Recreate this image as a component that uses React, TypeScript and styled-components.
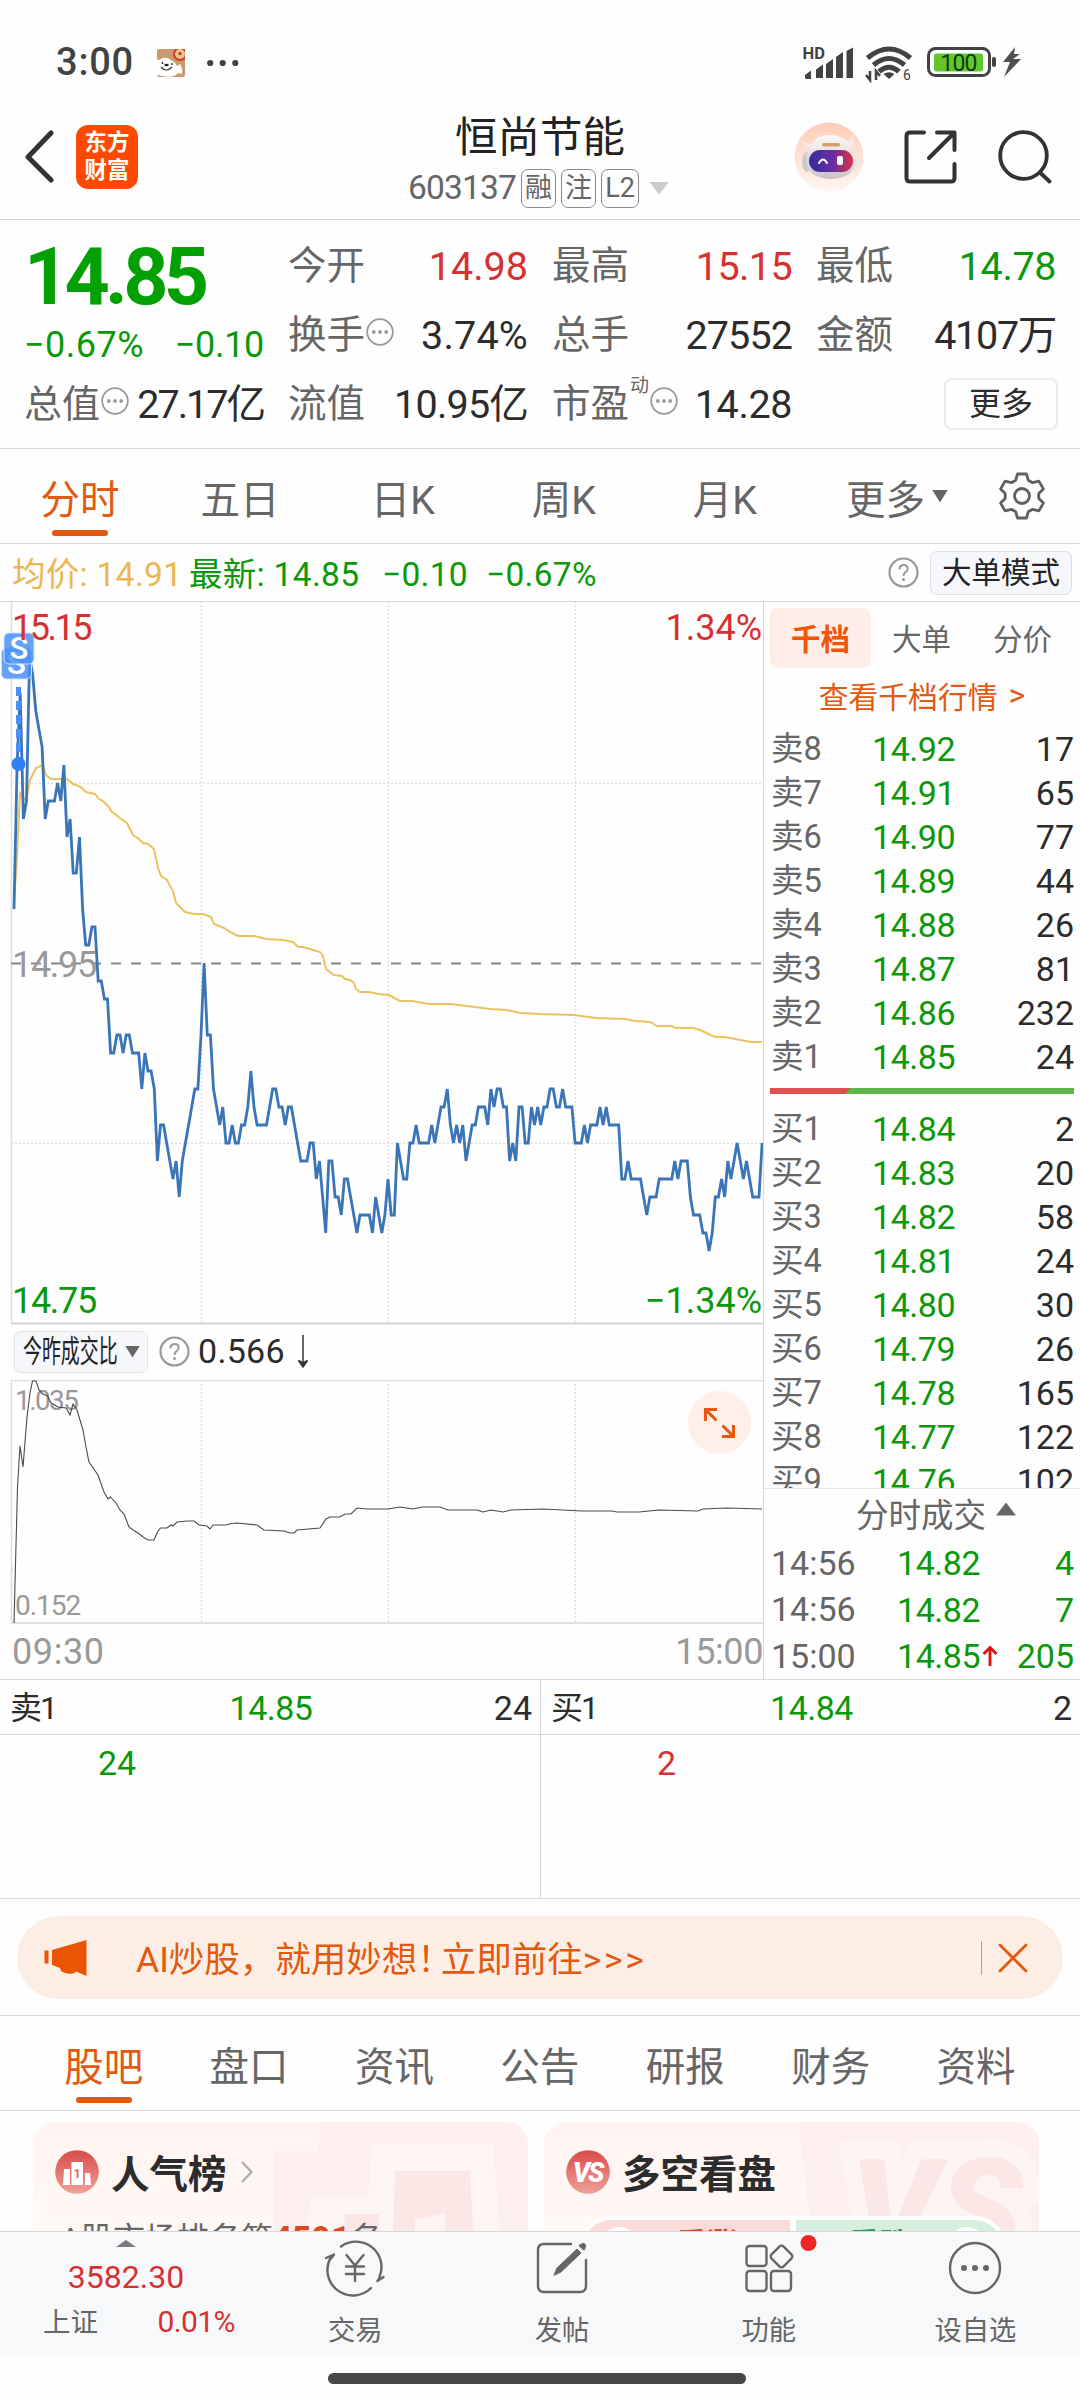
import React from "react";
import styled, { createGlobalStyle } from "styled-components";

const GREEN = "#0b980b";
const RED = "#d63031";
const ORANGE = "#e2590f";
const GRAY = "#666";
const DARK = "#2c2c2c";
const LINE = "#d9d9d9";
const FONT = `Roboto, "Noto Sans CJK SC", sans-serif`;

const GlobalStyle = createGlobalStyle`
  * { box-sizing: border-box; }
  body { margin: 0; background: #fefefe; font-family: ${FONT}; color: ${DARK}; }
  svg { display: block; flex: none; }
`;

const Screen = styled.div`
  width: 1080px;
  height: 2400px;
  overflow: hidden;
  display: flex;
  flex-direction: column;
  background: #fefefe;
  white-space: nowrap;
`;

const Text = styled.span<{ size: number; color?: string; weight?: number; ls?: number }>`
  font-size: ${(p) => p.size}px;
  line-height: 1.2;
  color: ${(p) => p.color ?? DARK};
  font-weight: ${(p) => p.weight ?? 400};
  letter-spacing: ${(p) => p.ls ?? 0}px;
`;

const Push = styled.div`
  flex: 1;
`;

/* ---------- status bar ---------- */

const StatusBar = styled.div`
  height: 96px;
  padding: 30px 59px 0 56px;
  display: flex;
  align-items: center;
  flex: none;
`;
const StatusApp = styled.div`
  margin: 0 22px 0 23px;
`;

function MascotIcon() {
  return (
    <svg width="28" height="28" viewBox="0 0 28 28">
      <rect width="28" height="28" rx="2" fill="#c99a6e" />
      <circle cx="23" cy="5" r="6" fill="#f0c48c" stroke="#c9402c" strokeWidth="2" />
      <circle cx="23" cy="4.500" r="1.600" fill="#b5342a" />
      <path d="M0 10q2 2 4 0q5-3 10 1q4 2 6 6l3-2q3 4 2 10l-4-1q-3 4-10 4L0 26z" fill="#fff" />
      <path d="M4 18q5 6 11 0" stroke="#333" strokeWidth="1.200" fill="none" />
      <ellipse cx="9.500" cy="16" rx="2.200" ry="1.300" fill="#222" />
      <path d="M5 13l1 2M15 14l0 2" stroke="#222" strokeWidth="1.300" />
    </svg>
  );
}

function StatusRight() {
  return (
    <svg width="220" height="40" viewBox="801 44 220 40" fill="#424242">
      <text x="802.500" y="60" fontSize="16.500" fontWeight="700" fontFamily="Roboto">HD</text>
      <path d="M805 79v-3l6-4.500v8.500h-5zM816 70.500l7-5v13.500h-7zM826 65l7-5v19h-7zM836 58l7-5v26h-7zM846.500 52l6.500-3.500v30.500h-6.500z" />
      <g fill="none" stroke="#424242" strokeWidth="5">
        <path d="M867.500 59q21.500-18 43 0" />
        <path d="M873.500 66q15.500-13 31 0" />
        <path d="M879 72.500q10-8.500 20 0" />
      </g>
      <path d="M889 80l-5.500-5q5.500-3.500 11 0z" />
      <path d="M870 72v9l-4-5M876 81v-9l4 5" stroke="#424242" strokeWidth="2.500" fill="none" />
      <text x="903" y="81" fontSize="14" fontFamily="Roboto">6</text>
      <rect x="928.500" y="49.500" width="61" height="27" rx="7" fill="none" stroke="#424242" strokeWidth="3" />
      <rect x="934" y="54.500" width="49" height="18" rx="2.500" fill="#62c62c" />
      <rect x="992" y="58" width="4" height="10" rx="2" />
      <text x="958.500" y="71.500" fontSize="23" textAnchor="middle" fontFamily="Roboto" letterSpacing="-1" fill="#0d3d05">100</text>
      <path d="M1015 48l-12 15h7l-6 15 17-18h-8l7-5h-6z" fill="#505050" />
    </svg>
  );
}

/* ---------- header ---------- */

const Header = styled.div`
  height: 124px;
  flex: none;
  border-bottom: 1px solid ${LINE};
  display: grid;
  grid-template-columns: 396px 288px 396px;
`;
const HeaderLeft = styled.div`
  display: flex;
  align-items: center;
  gap: 22px;
  padding: 0 0 2px 24px;
`;
const HeaderRight = styled.div`
  display: flex;
  align-items: center;
  justify-content: flex-end;
  padding: 0 28px 2px 0;
  gap: 40px;
`;
const Logo = styled.div`
  width: 62px;
  height: 64px;
  border-radius: 12px;
  background: #fe4900;
  color: #fff;
  font-size: 22.5px;
  font-weight: 700;
  line-height: 28px;
  display: flex;
  flex-direction: column;
  align-items: center;
  justify-content: center;
  padding-bottom: 2px;
`;
const HeaderCenter = styled.div`
  display: flex;
  flex-direction: column;
  align-items: center;
  padding-top: 16px;
`;
const CodeRow = styled.div`
  display: flex;
  align-items: center;
  gap: 5px;
  height: 40px;
  margin: 5px 3px 0 0;
`;
const Badge = styled.span<{ w: number }>`
  width: ${(p) => p.w}px;
  height: 39px;
  border: 1.5px solid #8a8a8a;
  border-radius: 7px;
  color: ${GRAY};
  font-size: 27px;
  line-height: 36px;
  text-align: center;
`;
const Caret = styled.i<{ w: number; h: number; color: string; up?: boolean }>`
  width: ${(p) => p.w}px;
  height: ${(p) => p.h}px;
  background: ${(p) => p.color};
  clip-path: ${(p) => (p.up ? "polygon(50% 0, 100% 100%, 0 100%)" : "polygon(0 0, 100% 0, 50% 100%)")};
`;

function Robot() {
  return (
    <svg width="70" height="70" viewBox="0 0 70 70">
      <defs>
        <linearGradient id="rbg" x1="0" y1="0" x2="0" y2="1">
          <stop offset="0" stopColor="#ffcdb6" />
          <stop offset="1" stopColor="#fff6f2" />
        </linearGradient>
        <linearGradient id="visor" x1="0" y1="0" x2="1" y2="0">
          <stop offset="0" stopColor="#332c9e" />
          <stop offset="0.550" stopColor="#6c2ca4" />
          <stop offset="1" stopColor="#dc3349" />
        </linearGradient>
        <linearGradient id="shell" x1="0" y1="0" x2="0" y2="1">
          <stop offset="0" stopColor="#fcf8f6" />
          <stop offset="1" stopColor="#c9c4c9" />
        </linearGradient>
      </defs>
      <circle cx="35" cy="35" r="34.500" fill="url(#rbg)" />
      <path d="M8 19q2 7 8 8l5-6q-8 2-13-2zM58 14q5 9-2 13l-8-8q8 1 10-5z" fill="#efe9e8" />
      <ellipse cx="13" cy="40" rx="5" ry="10" fill="#cfc8cd" />
      <ellipse cx="60" cy="40" rx="4.500" ry="9" fill="#eee5e4" />
      <path d="M13 34q3-21 23-21t24 21q2 12-5 18-8 5-18 5t-18-5q-8-6-6-18z" fill="url(#shell)" />
      <rect x="28" y="21" width="18" height="3.500" rx="1.700" fill="#d89d6e" />
      <rect x="15" y="28" width="44" height="22" rx="11" fill="url(#visor)" />
      <path d="M25 41q4-7 8 0" fill="none" stroke="#fff" strokeWidth="2" strokeLinecap="round" />
      <rect x="43" y="34" width="6" height="9" rx="2" fill="#fff" />
    </svg>
  );
}

/* ---------- quote panel ---------- */

const Quote = styled.div`
  height: 229px;
  flex: none;
  border-bottom: 1px solid ${LINE};
  padding: 12px 24px 0;
  display: grid;
  grid-template-columns: repeat(4, 240px);
  column-gap: 24px;
`;
const QuoteCol = styled.div`
  display: flex;
  flex-direction: column;
`;
const QuoteRow = styled.div<{ h?: number }>`
  height: ${(p) => p.h ?? 69}px;
  display: flex;
  align-items: center;
`;
const Sup = styled.sup`
  align-self: flex-start;
  font-size: 19px;
  line-height: 20px;
  color: ${GRAY};
  margin: 6px 0 0 1px;
`;
const MoreButton = styled.button`
  width: 114px;
  height: 52px;
  margin: 0 -2px 2px 0;
  border: 2px solid #e9ebee;
  border-radius: 8px;
  background: #fefefe;
  font: 400 32px/46px ${FONT};
  color: ${DARK};
  padding: 0;
`;
const DotsIcon = styled.svg`
  margin: 0 0 7px 1px;
`;

function Ellipsis() {
  return (
    <DotsIcon width="28" height="30" viewBox="0 0 28 30">
      <circle cx="14" cy="15" r="12.800" fill="none" stroke="#999" strokeWidth="1.800" />
      <g fill="#999">
        <circle cx="7.800" cy="15" r="1.900" />
        <circle cx="14" cy="15" r="1.900" />
        <circle cx="20.200" cy="15" r="1.900" />
      </g>
    </DotsIcon>
  );
}

function HelpIcon() {
  return (
    <svg width="31" height="31" viewBox="0 0 31 31">
      <circle cx="15.500" cy="15.500" r="14" fill="none" stroke="#999" strokeWidth="2.200" />
      <path d="M11.500 12.500q0-4.500 4.200-4.500t4 4q-.2 2-2.600 3.600-1.600 1.100-1.600 3.400" fill="none" stroke="#999" strokeWidth="2" />
      <circle cx="15.500" cy="22.500" r="1.500" fill="#999" />
    </svg>
  );
}

type Cell = { label: string; value: string; color?: string; dots?: boolean; sup?: string; ls?: number };
const QUOTE_COLS: Cell[][] = [
  [
    { label: "今开", value: "14.98", color: RED, ls: 0 },
    { label: "换手", value: "3.74%", dots: true, ls: 0.2 },
    { label: "流值", value: "10.95亿", ls: -0.8 },
  ],
  [
    { label: "最高", value: "15.15", color: RED, ls: -0.6 },
    { label: "总手", value: "27552", ls: -0.9 },
    { label: "市盈", value: "14.28", sup: "动", dots: true, ls: -0.4 },
  ],
  [
    { label: "最低", value: "14.78", color: GREEN, ls: -0.4 },
    { label: "金额", value: "4107万", ls: -1.3 },
  ],
];

function QuoteCell({ label, value, color, dots, sup, ls }: Cell) {
  return (
    <QuoteRow>
      <Text size={38.5} color={GRAY}>{label}</Text>
      {sup && <Sup>{sup}</Sup>}
      {dots && <Ellipsis />}
      <Push />
      <Text size={39.5} color={color} ls={ls}>{value}</Text>
    </QuoteRow>
  );
}

/* ---------- period tabs ---------- */

const PeriodTabs = styled.div`
  height: 95px;
  flex: none;
  border-bottom: 1px solid ${LINE};
  display: flex;
`;
const Tab = styled.div<{ w: number; active?: boolean }>`
  position: relative;
  width: ${(p) => p.w}px;
  display: flex;
  align-items: center;
  justify-content: center;
  gap: 7px;
  font-size: 39.5px;
  color: ${(p) => (p.active ? ORANGE : GRAY)};
  &::after {
    content: "";
    display: ${(p) => (p.active ? "block" : "none")};
    position: absolute;
    bottom: 7px;
    left: calc(50% - 28px);
    width: 56px;
    height: 6px;
    border-radius: 3px;
    background: ${ORANGE};
  }
`;

function Gear() {
  return (
    <svg width="50" height="50" viewBox="0 0 50 50" fill="none" stroke="#5f5f5f" strokeWidth="2.800" strokeLinejoin="round">
      <path d="M20.500 3h9l1.800 6.200 4.300 2.500 6.300-1.600 4.500 7.800-4.600 4.600v5l4.600 4.600-4.500 7.800-6.300-1.600-4.300 2.500L29.500 47h-9l-1.800-6.200-4.300-2.500-6.300 1.600-4.500-7.800 4.600-4.600v-5l-4.600-4.600 4.500-7.800 6.300 1.600 4.300-2.500z" />
      <circle cx="25" cy="25" r="7.500" />
    </svg>
  );
}

const InfoBar = styled.div`
  height: 58px;
  flex: none;
  border-bottom: 1px solid ${LINE};
  display: flex;
  align-items: center;
  padding: 0 8px 0 12px;
`;
const InfoText = styled.span<{ color: string; w: number }>`
  width: ${(p) => p.w}px;
  flex: none;
  color: ${(p) => p.color};
  font-size: 33.5px;
  line-height: 40px;
  letter-spacing: 0.3px;
  padding-top: 4px;
`;
const Gap = styled.i<{ w: number }>`
  width: ${(p) => p.w}px;
  flex: none;
`;
const ModeButton = styled.button`
  width: 142px;
  height: 44px;
  margin-left: 11px;
  border: 1.5px solid #dcdee2;
  border-radius: 7px;
  background: #f6f7fa;
  font: 400 29.5px/40px ${FONT};
  color: #222;
  padding: 0;
`;

/* ---------- charts ---------- */

const Main = styled.div`
  height: 1078px;
  flex: none;
  display: grid;
  grid-template-columns: 764px 316px;
  border-bottom: 1px solid ${LINE};
`;
const Charts = styled.div`
  border-right: 1px solid ${LINE};
  display: flex;
  flex-direction: column;
`;

/* One value per minute, in ticks of 0.01 above 14.75. */
const TICKS = [
  23, 31, 35, 28, 29, 37, 36, 34, 33, 32, 28, 29, 29, 29, 30, 29, 31, 27, 28, 25, 25, 27, 23, 21, 21, 22, 22, 19, 19, 18,
  18, 15, 15, 16, 16, 15, 16, 16, 15, 15, 15, 13, 15, 14, 14, 13, 9, 11, 11, 10, 9, 8, 9, 7, 9, 10, 11, 12, 13, 13,
  16, 20, 16, 16, 13, 12, 11, 12, 10, 10, 11, 10, 10, 11, 11, 12, 14, 12, 11, 11, 11, 11, 12, 13, 13, 12, 12, 11, 12, 12,
  11, 10, 9, 9, 9, 10, 10, 8, 9, 7, 5, 9, 9, 7, 7, 6, 8, 8, 7, 6, 5, 6, 6, 6, 6, 5, 7, 6, 5, 6,
  8, 6, 6, 10, 9, 8, 8, 10, 10, 11, 10, 10, 10, 10, 11, 10, 11, 12, 12, 13, 11, 10, 11, 10, 11, 9, 10, 11, 11, 12,
  12, 12, 11, 13, 12, 13, 13, 12, 12, 9, 10, 9, 12, 12, 10, 10, 12, 11, 12, 11, 12, 12, 13, 13, 12, 12, 13, 12, 12, 12,
  10, 10, 10, 11, 10, 11, 11, 11, 12, 11, 12, 11, 11, 11, 11, 8, 8, 9, 8, 8, 8, 8, 7, 6, 7, 7, 7, 8, 8, 8,
  8, 8, 9, 8, 9, 9, 9, 7, 6, 6, 6, 5, 5, 4, 5, 7, 7, 8, 7, 9, 8, 9, 10, 9, 8, 9, 8, 7, 7, 7, 10,
];
const pricePoints = TICKS.map((t, i) => `${(14 + i * 3.117).toFixed(1)},${722 - t * 18}`).join(" ");

const AVERAGE =
  "14,302 17,255 20,192 26,200 30,179 36,167 43,164 46,174 51,178 67,178 73,183 81,186 86,191 95,193 99,198 103,200 109,206 111,210 120,217 127,222 133,234 139,238 143,242 148,243 154,248 158,267 161,275 167,279 173,290 176,302 185,311 194,313 203,313 211,316 214,323 224,327 230,331 238,335 254,335 267,338 283,339 293,341 298,346 303,346 313,349 320,351 323,355 326,368 334,374 342,375 345,378 350,379 354,382 356,388 360,391 369,391 378,393 389,394 400,400 412,400 429,403 451,403 475,406 490,408 507,409 521,412 540,413 574,414 596,417 625,418 635,420 650,421 657,425 671,425 676,427 693,427 700,429 715,436 725,436 751,441 762,441";
const RATIO =
  "14,243 17.5,107 20,66 23,87 27,37 30,13 32.5,1 36,1 39,10 43,14 47.5,16 51,23 58,27 66,28 70,35 73,24 77,30 83,50 86,67 89,82 98,95 104,112 108,119 110.5,117 116,123 120,130 124,134 129,147 133,150 138,153 143,157 148,160 154,160 157.5,152 160.5,148 167,148 171,145 173,146 177,142 187,141 194,141 199,145 207,146 210,149 213,145 226,145 229,144 237,143 257,145 264,150 284,151 290,153 294,153 297,150 320,148 326,139 330,137 340,137 345,134 351,134 357,128 367,129 388,129 400,127 413,129 422,127 440,127 448,130 477,130 483,132 491,130 503,132 511,130 543,129 582,131 612,131 617,132 639,132 659,130 698,131 703,129 727,128 762,129";

function TradeFlag({ x, y }: { x: number; y: number }) {
  return (
    <g>
      <rect x={x} y={y} width="30" height="31" rx="5" fill="#4a90f7" fillOpacity="0.850" stroke="#cfe2ff" strokeWidth="1" />
      <text x={x + 15} y={y + 26} fontSize="31" fontWeight="500" fill="#fff" textAnchor="middle">S</text>
    </g>
  );
}

function PriceChart() {
  return (
    <svg width="763" height="723" viewBox="0 1 763 723" fontFamily={FONT} fontSize="36">
      <path d="M11.500 0V723" stroke="#dedede" strokeWidth="1.500" />
      <path d="M201.500 0V722M388.500 0V722M575.500 0V722M11 182.500H763M11 542.500H763" stroke="#dedede" strokeWidth="1.500" strokeDasharray="2 2" />
      <path d="M11 722.500H763" stroke="#d4d4d4" strokeWidth="2" />
      <path d="M11 362.500H763" stroke="#888" strokeWidth="1.800" strokeDasharray="10 10" />
      <text x="12" y="376" fill="#999" letterSpacing="-1.300">14.95</text>
      <text x="762" y="39" fill={RED} textAnchor="end">1.34%</text>
      <text x="12" y="712" fill={GREEN} letterSpacing="-1.300">14.75</text>
      <text x="762" y="712" fill={GREEN} textAnchor="end">−1.34%</text>
      <polyline points={AVERAGE} fill="none" stroke="#ecc25f" strokeWidth="2" />
      <polyline points={pricePoints} fill="none" stroke="#3a75b7" strokeWidth="2.800" />
      <path d="M18.500 86V160" stroke="#4a90f7" strokeWidth="5" strokeDasharray="9 5" />
      <circle cx="18.500" cy="163" r="7" fill="#2f80f5" />
      <TradeFlag x={1.5} y={47} />
      <TradeFlag x={4} y={32} />
      <text x="12" y="39" fill={RED} letterSpacing="-2.500">15.15</text>
    </svg>
  );
}

const RatioBar = styled.div`
  height: 55px;
  display: flex;
  align-items: center;
  padding: 0 0 2px 14px;
`;
const RatioSelect = styled.div`
  width: 134px;
  height: 42px;
  border: 1.5px solid #e2e4e8;
  border-radius: 7px;
  background: #f6f7fa;
  display: flex;
  align-items: center;
  justify-content: space-between;
  padding: 0 7px 0 8px;
  margin-right: 11px;
`;
const Condensed = styled.span`
  width: 95px;
  font-size: 31px;
  line-height: 38px;
  color: #222;
  transform: scaleX(0.61);
  transform-origin: left;
`;
const TimeAxis = styled.div`
  height: 54px;
  display: flex;
  align-items: center;
  justify-content: space-between;
  padding: 1px 0 0 12px;
`;

function RatioChart() {
  return (
    <svg width="763" height="245" viewBox="0 0 763 245" fontFamily={FONT} fontSize="28">
      <path d="M763 0.500H11.500V243.500" fill="none" stroke="#dedede" strokeWidth="1.500" />
      <path d="M201.500 0V242M388.500 0V242M575.500 0V242" stroke="#dedede" strokeWidth="1.500" strokeDasharray="2 2" />
      <path d="M11 243H763" stroke="#e0e0e0" strokeWidth="2" />
      <text x="15" y="30" fill="#999" letterSpacing="-1.600">1.035</text>
      <text x="15" y="235" fill="#999" letterSpacing="-1">0.152</text>
      <polyline points={RATIO} fill="none" stroke="#4a4a4a" strokeWidth="1.100" />
      <circle cx="719.500" cy="42.500" r="31.500" fill="#fef0e9" />
      <path d="M705.500 41V29.500H717M705.500 29.500l11 11M733.500 45V56.500H722M733.500 56.500l-11-11" fill="none" stroke={ORANGE} strokeWidth="3" />
    </svg>
  );
}

/* ---------- order book ---------- */

const Book = styled.div`
  display: flex;
  flex-direction: column;
`;
const BookTabs = styled.div`
  margin: 6px 6px 0;
  height: 60px;
  display: grid;
  grid-template-columns: repeat(3, 101px);
`;
const BookTab = styled.div<{ active?: boolean }>`
  border-radius: 8px;
  display: flex;
  align-items: center;
  justify-content: center;
  padding-bottom: 2px;
  font-size: 29.5px;
  color: ${(p) => (p.active ? "#f0560a" : GRAY)};
  font-weight: ${(p) => (p.active ? 700 : 400)};
  background: ${(p) => (p.active ? "#feeee7" : "transparent")};
`;
const BookLink = styled.div`
  height: 59px;
  display: flex;
  align-items: center;
  justify-content: center;
  gap: 11px;
  padding-bottom: 5px;
  font-size: 29.8px;
  color: ${ORANGE};
`;
const LinkArrow = styled.span`
  font-size: 32px;
`;
const Level = styled.div`
  height: 44px;
  display: grid;
  grid-template-columns: 58px 126px 1fr;
  align-items: center;
  padding: 0 6px 0 7px;
  font-size: 34px;
  line-height: 44px;
`;
const Side = styled.span`
  font-size: 32.5px;
  color: ${GRAY};
`;
const Price = styled.span`
  color: ${GREEN};
  text-align: right;
  letter-spacing: -0.5px;
`;
const Volume = styled.span<{ color?: string }>`
  color: ${(p) => p.color ?? DARK};
  text-align: right;
`;
const Bids = styled.div`
  height: 381px;
  overflow: hidden;
  flex: none;
`;
const BalanceBar = styled.div`
  height: 6px;
  margin: 9px 6px 13px 6px;
  background: #5fb54b;
`;
const BalanceSell = styled.div`
  width: 80px;
  height: 6px;
  background: #e0504e;
  clip-path: polygon(0 0, 100% 0, calc(100% - 5px) 100%, 0 100%);
`;
const TradesHead = styled.div`
  height: 52px;
  border-top: 1px solid #e4e4e4;
  display: flex;
  align-items: center;
  justify-content: center;
  gap: 10px;
  padding: 0 0 4px 28px;
  font-size: 32.5px;
  color: ${GRAY};
`;
const HeadCaret = styled(Caret)`
  margin-bottom: 7px;
`;
const Trade = styled.div`
  height: 46.5px;
  display: grid;
  grid-template-columns: 90px 119px 20px 1fr;
  align-items: center;
  padding: 0 6px 0 7px;
  font-size: 34px;
`;

const ASKS: [string, string, string][] = [
  ["卖8", "14.92", "17"],
  ["卖7", "14.91", "65"],
  ["卖6", "14.90", "77"],
  ["卖5", "14.89", "44"],
  ["卖4", "14.88", "26"],
  ["卖3", "14.87", "81"],
  ["卖2", "14.86", "232"],
  ["卖1", "14.85", "24"],
];
const BIDS: [string, string, string][] = [
  ["买1", "14.84", "2"],
  ["买2", "14.83", "20"],
  ["买3", "14.82", "58"],
  ["买4", "14.81", "24"],
  ["买5", "14.80", "30"],
  ["买6", "14.79", "26"],
  ["买7", "14.78", "165"],
  ["买8", "14.77", "122"],
  ["买9", "14.76", "102"],
];
const TRADES = [
  { time: "14:56", price: "14.82", vol: "4" },
  { time: "14:56", price: "14.82", vol: "7" },
  { time: "15:00", price: "14.85", vol: "205", up: true },
];

const renderLevel = ([side, price, vol]: [string, string, string]) => (
  <Level key={side}>
    <Side>{side}</Side>
    <Price>{price}</Price>
    <Volume>{vol}</Volume>
  </Level>
);

/* ---------- queue ---------- */

const Queues = styled.div`
  height: 219px;
  flex: none;
  display: grid;
  grid-template-columns: 540px 540px;
  border-bottom: 1px solid ${LINE};
`;
const Queue = styled.div`
  & + & { border-left: 1px solid ${LINE}; }
`;
const QueueHead = styled.div`
  height: 55px;
  display: grid;
  grid-template-columns: 1fr 1fr 1fr;
  align-items: center;
  padding: 3px 8px 0 10px;
  border-bottom: 1px solid ${LINE};
  > :nth-child(2) { text-align: center; }
  > :nth-child(3) { text-align: right; }
`;
const QueueBody = styled.div<{ left: number }>`
  padding: 8px 0 0 ${(p) => p.left}px;
`;

/* ---------- banner ---------- */

const BannerArea = styled.div`
  height: 117px;
  flex: none;
  padding: 17px 17px 0;
  border-bottom: 1px solid ${LINE};
`;
const Banner = styled.div`
  height: 83px;
  border-radius: 42px;
  background: #fceee5;
  display: flex;
  align-items: center;
  padding: 0 34px 0 27px;
`;
const BannerText = styled.span`
  font-size: 35.5px;
  line-height: 44px;
  padding-top: 5px;
  color: ${ORANGE};
`;
const Bang = styled.span`
  letter-spacing: -12px;
`;
const Arrows = styled.span`
  letter-spacing: 2.6px;
`;
const BannerRule = styled.i`
  width: 1px;
  height: 34px;
  background: #e8905f;
  margin-right: 15px;
`;

/* ---------- content tabs and cards ---------- */

const ContentTabs = styled(PeriodTabs)`
  padding: 0 31px;
`;
const Cards = styled.div`
  height: 120px;
  flex: none;
  overflow: hidden;
  padding: 11px 33px 0;
  display: grid;
  grid-template-columns: 495px 495px;
  column-gap: 16px;
`;
const Card = styled.div`
  position: relative;
  height: 200px;
  border-radius: 22px;
  overflow: hidden;
  background: linear-gradient(#fff4f1, #fff9f6 110px);
`;
const CardArt = styled.svg`
  position: absolute;
  inset: 0;
`;
const CardHead = styled.div`
  position: relative;
  display: flex;
  align-items: center;
  padding: 27px 0 0 22px;
  height: 72px;
`;
const CardTitle = styled.span`
  margin-left: 12px;
  padding-top: 6px;
  font-size: 38.5px;
  line-height: 46px;
  font-weight: 600;
`;
const CardText = styled.div`
  position: relative;
  padding: 26px 0 0 27px;
  font-size: 32px;
  line-height: 38px;
  color: ${GRAY};
`;
const Rank = styled.b`
  color: #dc4a24;
  font-weight: 900;
  font-size: 32.5px;
  letter-spacing: 0.5px;
`;
const Vote = styled.div`
  position: relative;
  margin: 22px 32px 0 34px;
  height: 66px;
  border: 4px solid #fff;
  border-radius: 33px;
  overflow: hidden;
  display: grid;
  grid-template-columns: 1fr 1fr;
  gap: 6px;
  background: #fff;
`;
const VoteSide = styled.div<{ bg: string; color: string; mirrored?: boolean }>`
  background: ${(p) => p.bg};
  color: ${(p) => p.color};
  font-size: 30px;
  font-weight: 700;
  line-height: 48px;
  display: flex;
  justify-content: center;
  flex-direction: ${(p) => (p.mirrored ? "row-reverse" : "row")};
  gap: 40px;
  padding: ${(p) => (p.mirrored ? "0 0 0 36px" : "0 34px 0 0")};
`;
const VoteDot = styled.i`
  width: 36px;
  height: 36px;
  border-radius: 50%;
  margin-top: 7px;
  background: #fff;
`;

/* ---------- bottom nav ---------- */

const Nav = styled.div`
  height: 125px;
  flex: none;
  border-top: 1px solid #d5d7da;
  background: #f7f8fa;
  display: grid;
  grid-template-columns: 252px repeat(4, 206.7px);
`;
const IndexBox = styled.div`
  display: flex;
  flex-direction: column;
  align-items: center;
  padding-top: 8px;
`;
const IndexValue = styled.span`
  margin-top: 11px;
  font-size: 32px;
  line-height: 38px;
  color: ${RED};
`;
const IndexRow = styled.div`
  display: flex;
  align-items: center;
  justify-content: space-between;
  width: 192px;
  margin: 8px 0 0 26px;
`;
const NavItem = styled.div`
  display: flex;
  flex-direction: column;
  align-items: center;
  gap: 16px;
  padding-top: 5px;
`;
const HomeArea = styled.div`
  height: 44px;
  flex: none;
  display: flex;
  justify-content: center;
  padding-top: 17px;
`;
const HomeBar = styled.i`
  width: 418px;
  height: 11px;
  border-radius: 6px;
  background: #474747;
  margin-right: 6px;
`;

function NavIcon({ kind }: { kind: string }) {
  return (
    <svg width="66" height="62" viewBox="-33 -31 66 62" overflow="visible" fill="none" stroke="#666" strokeWidth="2.400" strokeLinejoin="round" strokeLinecap="round">
      {kind === "交易" && (
        <>
          <path d="M-14 -21.500A25.500 25.500 0 0 1 24.500 9M23 12.500l5.500-3.500M24.500 10l-2 3M-24 -11A25.500 25.500 0 0 0 16 20M-29 -10l8-3.500l-3 4" />
          <path d="M-8.500 -13L0 -2.500L8.500 -13M-9 -1.500H9M-9 6H9M0 -2.500V13" />
        </>
      )}
      {kind === "发帖" && (
        <>
          <path d="M9 -24H-18q-6 0-6 6V18q0 6 6 6H18q6 0 6-6V-8" />
          <path d="M-8 7l3-7L15 -19l4 4L-1 4z" fill="#666" strokeWidth="1" />
          <path d="M18 -22.500l3.500-1.500 1.500 1.500-1 3.500z" fill="#666" />
        </>
      )}
      {kind === "功能" && (
        <>
          <rect x="-22.500" y="-22" width="20" height="20" rx="3" />
          <rect x="-22.500" y="3" width="20" height="20" rx="3" />
          <rect x="2" y="3" width="20" height="20" rx="3" />
          <rect x="4" y="-20" width="17" height="17" rx="3" transform="rotate(45 12.500 -11.500)" />
          <circle cx="39.500" cy="-25" r="8" fill="#ee2626" stroke="none" />
        </>
      )}
      {kind === "设自选" && (
        <>
          <circle r="25" />
          <g fill="#666" stroke="none">
            <circle cx="-11" r="3" />
            <circle r="3" />
            <circle cx="11" r="3" />
          </g>
        </>
      )}
    </svg>
  );
}

function RoundBadge({ children, id }: { children: React.ReactNode; id: string }) {
  return (
    <svg width="44" height="44" viewBox="0 0 44 44">
      <defs>
        <linearGradient id={id} x1="0" y1="0" x2="0" y2="1">
          <stop offset="0" stopColor="#d84b47" />
          <stop offset="1" stopColor="#f0a19b" />
        </linearGradient>
      </defs>
      <circle cx="22" cy="22" r="21.800" fill={`url(#${id})`} />
      {children}
    </svg>
  );
}

export default function App() {
  return (
    <Screen>
      <GlobalStyle />
      <StatusBar>
        <Text size={38} weight={500} color="#424242" ls={0.8}>3:00</Text>
        <StatusApp><MascotIcon /></StatusApp>
        <svg width="32" height="8" viewBox="0 0 32 8" fill="#424242">
          <circle cx="3.200" cy="4" r="3.100" /><circle cx="15.700" cy="4" r="3.100" /><circle cx="28.300" cy="4" r="3.100" />
        </svg>
        <Push />
        <StatusRight />
      </StatusBar>

      <Header>
        <HeaderLeft>
          <svg width="30" height="56" viewBox="0 0 30 56" fill="none" stroke="#333" strokeWidth="5" strokeLinecap="round" strokeLinejoin="round">
            <path d="M27 4L4 28L27 51" />
          </svg>
          <Logo><span>东方</span><span>财富</span></Logo>
        </HeaderLeft>
        <HeaderCenter>
          <Text size={42.5} color="#222">恒尚节能</Text>
          <CodeRow>
            <Text size={33.5} color={GRAY} ls={-0.8}>603137</Text>
            <Badge w={35}>融</Badge>
            <Badge w={35}>注</Badge>
            <Badge w={38}>L2</Badge>
            <Gap w={0} />
            <Caret w={20} h={13} color="#ccc" />
          </CodeRow>
        </HeaderCenter>
        <HeaderRight>
          <Robot />
          <svg width="54" height="54" viewBox="0 0 54 54" fill="none" stroke="#333" strokeWidth="4" strokeLinecap="round" strokeLinejoin="round">
            <path d="M20 2.500H6q-3.500 0-3.500 3.500V48q0 3.500 3.500 3.500H47q3.500 0 3.500-3.500V34M33 2.500H50.500V20M50 3L25 28" />
          </svg>
          <svg width="54" height="54" viewBox="0 0 54 54" fill="none" stroke="#333" strokeWidth="3.800" strokeLinecap="round">
            <circle cx="25.500" cy="25.500" r="23.300" />
            <path d="M42 42.500L51.500 51.500" />
          </svg>
        </HeaderRight>
      </Header>

      <Quote>
        <QuoteCol>
          <QuoteRow h={90}><Text size={79} weight={700} color="#02a002" ls={-4.8}>14.85</Text></QuoteRow>
          <QuoteRow h={48}>
            <Text size={36} color={GREEN} ls={0.5}>−0.67%</Text>
            <Push />
            <Text size={36} color={GREEN} ls={-0.3}>−0.10</Text>
          </QuoteRow>
          <QuoteRow>
            <Text size={38} color={GRAY}>总值</Text>
            <Ellipsis />
            <Push />
            <Text size={39.5} ls={-2}>27.17亿</Text>
          </QuoteRow>
        </QuoteCol>
        {QUOTE_COLS.map((col, i) => (
          <QuoteCol key={i}>
            {col.map((c) => <QuoteCell key={c.label} {...c} />)}
            {i === 2 && <QuoteRow><Push /><MoreButton>更多</MoreButton></QuoteRow>}
          </QuoteCol>
        ))}
      </Quote>

      <PeriodTabs>
        <Tab w={160} active>分时</Tab>
        <Tab w={160}>五日</Tab>
        <Tab w={166}>日K</Tab>
        <Tab w={156}>周K</Tab>
        <Tab w={166}>月K</Tab>
        <Tab w={178}>更多<Caret w={16} h={13} color={GRAY} /></Tab>
        <Tab w={72}><Gear /></Tab>
      </PeriodTabs>

      <InfoBar>
        <InfoText w={177} color="#edb750">均价: 14.91</InfoText>
        <InfoText w={193} color={GREEN}>最新: 14.85</InfoText>
        <InfoText w={104} color={GREEN}>−0.10</InfoText>
        <InfoText w={120} color={GREEN}>−0.67%</InfoText>
        <Push />
        <HelpIcon />
        <ModeButton>大单模式</ModeButton>
      </InfoBar>

      <Main>
        <Charts>
          <PriceChart />
          <RatioBar>
            <RatioSelect>
              <Condensed>今昨成交比</Condensed>
              <Caret w={15} h={12} color={GRAY} />
            </RatioSelect>
            <HelpIcon />
            <Gap w={8} />
            <Text size={34} ls={0.3}>0.566</Text>
            <Gap w={11} />
            <svg width="14" height="36" viewBox="0 0 14 36" fill="none" stroke="#333" strokeWidth="1.500">
              <path d="M7 1V32" />
              <path d="M2.500 26.500L7 33l4.500-6.500L7 29z" fill="#333" />
            </svg>
          </RatioBar>
          <RatioChart />
          <TimeAxis>
            <Text size={36} color="#999" ls={0.6}>09:30</Text>
            <Text size={36} color="#999" ls={-0.4}>15:00</Text>
          </TimeAxis>
        </Charts>
        <Book>
          <BookTabs>
            <BookTab active>千档</BookTab>
            <BookTab>大单</BookTab>
            <BookTab>分价</BookTab>
          </BookTabs>
          <BookLink><span>查看千档行情</span><LinkArrow>&gt;</LinkArrow></BookLink>
          {ASKS.map(renderLevel)}
          <BalanceBar><BalanceSell /></BalanceBar>
          <Bids>{BIDS.map(renderLevel)}</Bids>
          <TradesHead>分时成交<HeadCaret up w={20} h={13} color={GRAY} /></TradesHead>
          {TRADES.map((t, i) => (
            <Trade key={i}>
              <Text size={34} color={GRAY}>{t.time}</Text>
              <Price>{t.price}</Price>
              {t.up ? (
                <svg width="20" height="22" viewBox="0 0 20 22" fill="none" stroke="#e01010" strokeWidth="2.800">
                  <path d="M10 21V2M3.500 9L10 2.500L16.500 9" />
                </svg>
              ) : <span />}
              <Volume color={GREEN}>{t.vol}</Volume>
            </Trade>
          ))}
        </Book>
      </Main>

      <Queues>
        <Queue>
          <QueueHead>
            <Text size={32} ls={-2}>卖1</Text><Text size={34} color={GREEN} ls={-0.5}>14.85</Text><Text size={34}>24</Text>
          </QueueHead>
          <QueueBody left={98}><Text size={34} color={GREEN}>24</Text></QueueBody>
        </Queue>
        <Queue>
          <QueueHead>
            <Text size={32} ls={-2}>买1</Text><Text size={34} color={GREEN} ls={-0.5}>14.84</Text><Text size={34}>2</Text>
          </QueueHead>
          <QueueBody left={116}><Text size={34} color={RED}>2</Text></QueueBody>
        </Queue>
      </Queues>

      <BannerArea>
        <Banner>
          <svg width="43" height="40" viewBox="0 0 43 40" fill="#ea5504">
            <path d="M0.500 12.500h4v13h-4zM8 12L42.500 2V38L32 33.500q-2 3-8 2-8-1-8-5.500L8 27z" />
          </svg>
          <Gap w={49} />
          <BannerText>AI炒股，就用妙想<Bang>！</Bang>立即前往<Arrows>&gt;&gt;&gt;</Arrows></BannerText>
          <Push />
          <BannerRule />
          <svg width="32" height="32" viewBox="0 0 32 32" stroke={ORANGE} strokeWidth="2.800" strokeLinecap="round">
            <path d="M3 3L29 29M29 3L3 29" />
          </svg>
        </Banner>
      </BannerArea>

      <ContentTabs>
        {["股吧", "盘口", "资讯", "公告", "研报", "财务", "资料"].map((t, i) => (
          <Tab key={t} w={145.4} active={i === 0}>{t}</Tab>
        ))}
      </ContentTabs>

      <Cards>
        <Card>
          <CardArt width="495" height="109" viewBox="0 0 495 109">
            <path d="M288 0H495V109H241V29H285z" fill="#fdefed" />
            <path d="M339 22H460L467 109H274L277 75H335z" fill="#fef6f4" />
            <path d="M362 49H437L440 109H360zM312 92H346V109H311z" fill="#fbe7e5" />
            <path d="M382 98L412 91V109H382z" fill="#fef4f2" />
          </CardArt>
          <CardHead>
            <RoundBadge id="rank">
              <path d="M9 19h6v16H8zM16.500 12h11.500v23H16.500zM30 23h5l1 12H30z" fill="#fff" />
              <text x="22.200" y="27.500" fontSize="12" fontWeight="700" fill="#dc6661" textAnchor="middle">1</text>
            </RoundBadge>
            <CardTitle>人气榜</CardTitle>
            <Gap w={13} />
            <svg width="14" height="24" viewBox="0 0 14 24" fill="none" stroke="#aaa" strokeWidth="2.200">
              <path d="M2 2L11.500 12L2 22" />
            </svg>
          </CardHead>
          <CardText>A股市场排名第<Rank>4591</Rank>名</CardText>
        </Card>
        <Card>
          <CardArt width="495" height="109" viewBox="0 0 495 109">
            <path d="M255 0H495V109H267z" fill="#fdf0ee" />
            <text x="306" y="136" fontFamily="Roboto" fontSize="138" fontWeight="900" fontStyle="italic" fill="#fbe7e5" stroke="#fef5f3" strokeWidth="34" paintOrder="stroke">VS</text>
          </CardArt>
          <CardHead>
            <RoundBadge id="vs">
              <text x="21.500" y="32" fontSize="27" fontWeight="900" fontStyle="italic" letterSpacing="-2" fill="#fff" textAnchor="middle">VS</text>
            </RoundBadge>
            <CardTitle>多空看盘</CardTitle>
          </CardHead>
          <Vote>
            <VoteSide bg="#fbdcd9" color="#c9512f"><VoteDot />看涨</VoteSide>
            <VoteSide bg="#d5eedd" color="#2f9a5b" mirrored><VoteDot />看跌</VoteSide>
          </Vote>
        </Card>
      </Cards>

      <Nav>
        <IndexBox>
          <Caret up w={20} h={7} color="#7b7b80" />
          <IndexValue>3582.30</IndexValue>
          <IndexRow>
            <Text size={27.5} color={GRAY}>上证</Text>
            <Text size={30} color={RED} ls={-0.6}>0.01%</Text>
          </IndexRow>
        </IndexBox>
        {["交易", "发帖", "功能", "设自选"].map((k) => (
          <NavItem key={k}>
            <NavIcon kind={k} />
            <Text size={27.3} color={GRAY}>{k}</Text>
          </NavItem>
        ))}
      </Nav>
      <HomeArea><HomeBar /></HomeArea>
    </Screen>
  );
}
